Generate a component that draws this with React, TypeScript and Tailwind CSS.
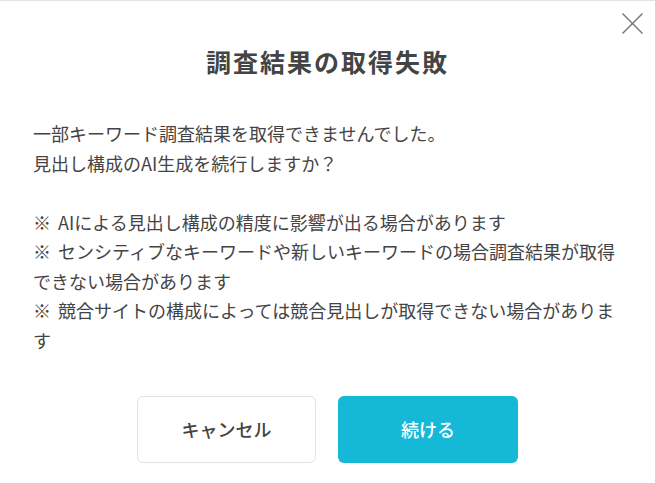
const NOTES = [
  'AIによる見出し構成の精度に影響が出る場合があります',
  'センシティブなキーワードや新しいキーワードの場合調査結果が取得できない場合があります',
  '競合サイトの構成によっては競合見出しが取得できない場合があります',
];

export default function App() {
  return (
    <div
      className="relative w-[655px] h-[483px] bg-white border-t border-[#e3e3e3] text-[#444]"
      style={{ fontFamily: '"Noto Sans CJK JP", "Noto Sans", sans-serif' }}
    >
      {/* 閉じる */}
      <button className="absolute top-[12px] right-[12px] text-[#777]">
        <svg width="21" height="21" viewBox="0 0 21 21" fill="none" stroke="currentColor" strokeWidth="1.4">
          <line x1="0.5" y1="0.5" x2="20.5" y2="20.5" />
          <line x1="20.5" y1="0.5" x2="0.5" y2="20.5" />
        </svg>
      </button>

      <h1 className="pt-[42px] text-center text-[25px] leading-[36px] tracking-[2px] font-bold text-[#444]">
        調査結果の取得失敗
      </h1>

      <div className="mt-[40px] px-[33px] text-[18px] leading-[29.5px]">
        <p>
          一部キーワード調査結果を取得できませんでした。
          <br />
          見出し構成のAI生成を続行しますか？
        </p>
        <div className="h-[29.5px]" />
        {NOTES.map((note) => (
          <p key={note}>
            <span className="mr-[7px]">※</span>
            {note}
          </p>
        ))}
      </div>

      <div className="mt-[41px] flex justify-center gap-[22px]">
        <button className="w-[179px] h-[67px] rounded-md border border-[#e2e2e2] bg-white text-[18px] font-medium text-[#444]">
          キャンセル
        </button>
        <button className="w-[180px] h-[67px] rounded-md bg-[#16b8d8] text-[18px] font-medium text-white">
          続ける
        </button>
      </div>
    </div>
  );
}
